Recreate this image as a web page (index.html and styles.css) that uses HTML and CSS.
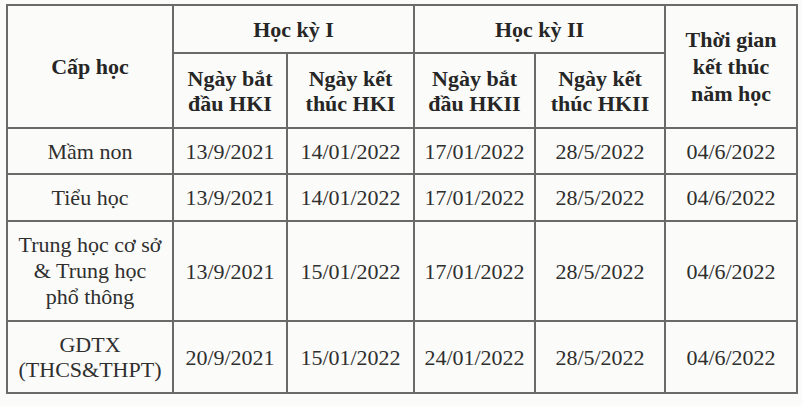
FILE: index.html
```html
<!DOCTYPE html>
<html>
<head>
<meta charset="utf-8">
<link rel="stylesheet" href="styles.css">
</head>
<body class="a">
<div class="page a">
<table class="schedule a">
  <colgroup>
    <col class="c-level">
    <col class="c1">
    <col class="c2">
    <col class="c3">
    <col class="c4">
    <col class="c5">
  </colgroup>
  <tr class="h1">
    <td rowspan="2" class="a bold">Cấp học</td>
    <td colspan="2" class="a bold">Học kỳ I</td>
    <td colspan="2" class="a bold">Học kỳ II</td>
    <td rowspan="2" class="a bold tall">Thời gian<br>kết thúc<br>năm học</td>
  </tr>
  <tr class="h2">
    <td class="a bold">Ngày bắt<br>đầu HKI</td>
    <td class="a bold">Ngày kết<br>thúc HKI</td>
    <td class="a bold">Ngày bắt<br>đầu HKII</td>
    <td class="a bold">Ngày kết<br>thúc HKII</td>
  </tr>
  <tr class="r1">
    <td class="a">Mầm non</td><td class="a">13/9/2021</td><td class="a">14/01/2022</td><td class="a">17/01/2022</td><td class="a">28/5/2022</td><td class="a">04/6/2022</td>
  </tr>
  <tr class="r2">
    <td class="a">Tiểu học</td><td class="a">13/9/2021</td><td class="a">14/01/2022</td><td class="a">17/01/2022</td><td class="a">28/5/2022</td><td class="a">04/6/2022</td>
  </tr>
  <tr class="r3">
    <td class="a lvl3">Trung học cơ sở<br>&amp; Trung học<br>phổ thông</td><td class="a">13/9/2021</td><td class="a">15/01/2022</td><td class="a">17/01/2022</td><td class="a">28/5/2022</td><td class="a">04/6/2022</td>
  </tr>
  <tr class="r4">
    <td class="a">GDTX<br>(THCS&amp;THPT)</td><td class="a">20/9/2021</td><td class="a">15/01/2022</td><td class="a">24/01/2022</td><td class="a">28/5/2022</td><td class="a">04/6/2022</td>
  </tr>
</table>
</div>
</body>
</html>
```
FILE: styles.css
```css
.a { font-family: "Liberation Serif"; }
body { margin: 0; padding: 0; background: #fbfbf9; }
.page { width: 802px; height: 406px; padding: 4px 0 0 6px; box-sizing: border-box; }
.schedule { border-collapse: collapse; table-layout: fixed; width: 790px; color: #2f2f2f; }
td { font-size: 22px; border: 2px solid #6a6a6a; padding: 0; text-align: center; vertical-align: middle; line-height: 25px; }
.bold { font-weight: bold; color: #262626; }
.tall { line-height: 27px; }
.lvl3 { line-height: 26px; }
.c-level { width: 166px; }
.c1 { width: 114px; }
.c2 { width: 127px; }
.c3 { width: 121px; }
.c4 { width: 130px; }
.c5 { width: 132px; }
.h1 { height: 48px; }
.h2 { height: 75px; }
.r1 { height: 46px; }
.r2 { height: 47px; }
.r3 { height: 100px; }
.r4 { height: 72px; }
```
